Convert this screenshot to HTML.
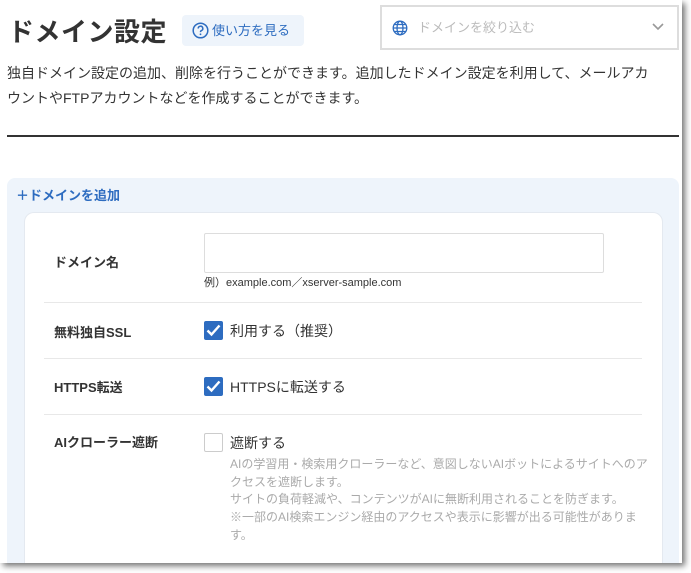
<!DOCTYPE html>
<html><head><meta charset="utf-8"><style>
*{box-sizing:border-box;margin:0;padding:0}
body{width:691px;height:573px;background:#fff;font-family:"Liberation Sans","Noto Sans CJK JP",sans-serif;color:#333;position:relative;overflow:hidden}
.page{position:absolute;left:0;top:0;width:682px;height:563px;background:#fff;box-shadow:3px 3px 6px rgba(0,0,0,.55);overflow:hidden}
.a{position:absolute}
h1{position:absolute;left:8px;top:12px;font-size:26px;font-weight:bold;color:#333;letter-spacing:.5px}
.help{left:182px;top:15px;width:122px;height:31px;background:#eef4fb;border-radius:4px;color:#2d6cc0;font-size:13px;line-height:31px;padding-left:30px}
.sel{left:380px;top:5px;width:299px;height:45px;border:2px solid #ddd;color:#bbb;font-size:13px;line-height:41px;padding-left:36px}
.desc{left:7px;top:61px;width:652px;font-size:14px;line-height:25px;color:#333}
.hr{left:7px;top:135px;width:672px;height:2px;background:#333}
.panel{left:7px;top:178px;width:672px;height:385px;background:#eef4fb;border-radius:8px 8px 0 0}
.add{left:16px;top:185px;color:#2d6cc0;font-size:13px;font-weight:bold}
.card{left:24px;top:212px;width:639px;height:351px;background:#fff;border-radius:10px 10px 0 0;border:1px solid #e4e9f0;border-bottom:none}
.lbl{left:54px;font-size:13px;font-weight:bold;color:#333}
.sep{left:44px;width:598px;height:1px;background:#e8e8e8}
.inp{left:204px;top:233px;width:400px;height:40px;border:1px solid #ddd;border-radius:2px}
.cb{left:204px;width:19px;height:19px;border-radius:2px;background:#2d6cc0}
.cb.off{background:#fff;border:1.5px solid #ccc}
.ct{left:230px;font-size:14px;color:#333}
.note{left:230px;top:456px;width:420px;font-size:12px;line-height:17.7px;color:#aaa}
</style></head><body>
<div class="page">
<h1>ドメイン設定</h1>
<div class="a help">使い方を見る</div>
<svg class="a" style="left:192px;top:22px" width="17" height="17" viewBox="0 0 17 17"><circle cx="8.5" cy="8.5" r="7.3" fill="none" stroke="#2d6cc0" stroke-width="1.5"/><path d="M6.2 6.5a2.3 2.3 0 1 1 3.2 2.1c-.7.3-.9.7-.9 1.5" fill="none" stroke="#2d6cc0" stroke-width="1.5"/><circle cx="8.5" cy="12.3" r=".9" fill="#2d6cc0"/></svg>
<div class="a sel">ドメインを絞り込む</div>
<svg class="a" style="left:392px;top:20px" width="16" height="16" viewBox="0 0 16 16"><g fill="none" stroke="#2d6cc0" stroke-width="1.3"><circle cx="8" cy="8" r="6.8"/><ellipse cx="8" cy="8" rx="3" ry="6.8"/><path d="M1.2 8h13.6M2.3 4.5h11.4M2.3 11.5h11.4"/></g></svg>
<svg class="a" style="left:652px;top:23px" width="12" height="8" viewBox="0 0 12 8"><path d="M1 1l5 5 5-5" fill="none" stroke="#999" stroke-width="1.6"/></svg>
<div class="a desc">独自ドメイン設定の追加、削除を行うことができます。追加したドメイン設定を利用して、メールアカ<br>ウントやFTPアカウントなどを作成することができます。</div>
<div class="a hr"></div>
<div class="a panel"></div>
<div class="a add">＋ドメインを追加</div>
<div class="a card"></div>
<div class="a lbl" style="top:252px">ドメイン名</div>
<div class="a inp"></div>
<div class="a" style="left:204px;top:274px;font-size:11px;color:#333">例）example.com／xserver-sample.com</div>
<div class="a sep" style="top:302px"></div>
<div class="a lbl" style="top:322px">無料独自SSL</div>
<div class="a cb" style="top:321px"></div>
<svg class="a" style="left:206px;top:324px" width="15" height="13" viewBox="0 0 15 13"><path d="M1.5 6.5l4 4L13.5 1.5" fill="none" stroke="#fff" stroke-width="2.4"/></svg>
<div class="a ct" style="top:321px">利用する（推奨）</div>
<div class="a sep" style="top:358px"></div>
<div class="a lbl" style="top:377px">HTTPS転送</div>
<div class="a cb" style="top:377px"></div>
<svg class="a" style="left:206px;top:380px" width="15" height="13" viewBox="0 0 15 13"><path d="M1.5 6.5l4 4L13.5 1.5" fill="none" stroke="#fff" stroke-width="2.4"/></svg>
<div class="a ct" style="top:377px">HTTPSに転送する</div>
<div class="a sep" style="top:414px"></div>
<div class="a lbl" style="top:432px">AIクローラー遮断</div>
<div class="a cb off" style="top:433px"></div>
<div class="a ct" style="top:433px">遮断する</div>
<div class="a note">AIの学習用・検索用クローラーなど、意図しないAIボットによるサイトへのアクセスを遮断します。<br>サイトの負荷軽減や、コンテンツがAIに無断利用されることを防ぎます。<br>※一部のAI検索エンジン経由のアクセスや表示に影響が出る可能性があります。</div>
</div>
</body></html>
